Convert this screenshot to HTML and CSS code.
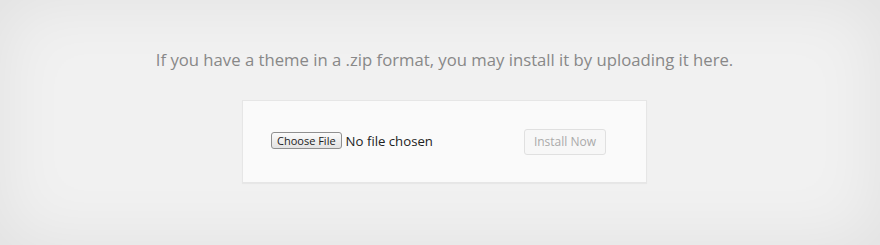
FILE: index.html
```html
<!DOCTYPE html>
<html>
<head>
<meta charset="utf-8">
<link rel="stylesheet" href="styles.css">
</head>
<body>
<div class="page">
  <p class="intro">If you have a theme in a .zip format, you may install it by uploading it here.</p>
  <div class="upload">
    <div class="file">
      <span class="choose">Choose File</span>
      <span class="none">No file chosen</span>
    </div>
    <span class="install">Install Now</span>
  </div>
</div>
</body>
</html>
```
FILE: styles.css
```css
html, body {
  margin: 0;
  padding: 0;
}
body {
  width: 880px;
  height: 245px;
  background: #f1f1f1;
  overflow: hidden;
}
.page {
  width: 880px;
  height: 245px;
  box-sizing: border-box;
  box-shadow: inset 0 0 70px rgba(0, 0, 0, 0.07);
  display: flex;
  flex-direction: column;
  align-items: center;
  padding: 48px 0 0 9px;
}
.intro {
  margin: 0;
  font-family: "Open Sans", sans-serif;
  font-size: 16.7px;
  line-height: 23px;
  color: #888;
}
.upload {
  margin-top: 29px;
  width: 405px;
  height: 83px;
  box-sizing: border-box;
  background: #fafafa;
  border: 1px solid #e6e6e6;
  box-shadow: 0 1px 1px rgba(0, 0, 0, 0.04);
  display: flex;
  align-items: center;
  justify-content: space-between;
  padding: 0 40px 0 28px;
}
.file {
  display: flex;
  align-items: center;
  gap: 4px;
  margin-top: -2px;
}
.choose {
  font-family: "Open Sans", sans-serif;
  font-size: 11px;
  line-height: 15px;
  color: #222;
  padding: 0 5px;
  border: 1px solid #8f8f8f;
  border-radius: 3px;
  background: linear-gradient(#fbfbfb, #e3e3e3);
}
.none {
  font-family: "Open Sans", sans-serif;
  font-size: 13.2px;
  color: #222;
}
.install {
  font-family: "Open Sans", sans-serif;
  font-size: 12px;
  line-height: 24px;
  color: #aaa;
  padding: 0 9px;
  border: 1px solid #e0e0e0;
  border-radius: 3px;
  background: #f7f7f7;
}
```
